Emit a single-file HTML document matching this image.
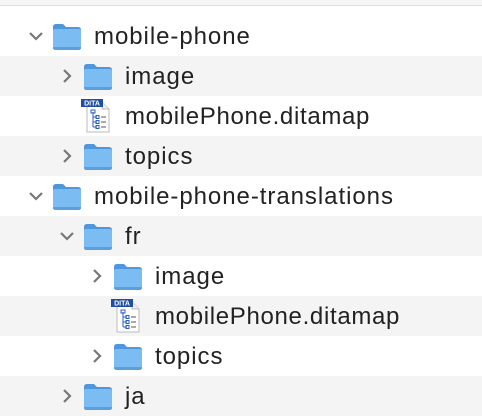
<!DOCTYPE html>
<html><head><style>
body{margin:0;width:482px;height:418px;overflow:hidden;background:#fff;font-family:"Liberation Sans",sans-serif;position:relative}
.top{position:absolute;left:0;top:0;width:482px;height:5px;background:#f6f6f6;border-bottom:1px solid #dedede}
.row{position:absolute;left:0;width:482px;height:40px}
.g{background:#f4f4f4}
.t{position:absolute;top:7px;font-size:24px;color:#222;letter-spacing:0.95px}
.t2{letter-spacing:0.68px}
.ch{position:absolute;top:12px}
.f{position:absolute;top:6px}
.d{position:absolute;top:4px}
</style></head><body>
<div class="top"></div>
<svg width="0" height="0" style="position:absolute">
<defs>
<g id="fold"><path d="M1 4 Q1 1 4 1 H11 L14 4 H26 Q29 4 29 7 V24 Q29 27 26 27 H4 Q1 27 1 24Z" fill="#4f97dc"/><path d="M1 8 Q1 6 3 6 H27 Q29 6 29 8 V24 Q29 27 26 27 H4 Q1 27 1 24Z" fill="#7bbcf2"/><path d="M1 24 V25 Q1 27 4 27 H26 Q29 27 29 25 V24Z" fill="#5d9fdc"/></g>
<g id="down"><path d="M1 1 L7 7 L13 1" fill="none" stroke="#777" stroke-width="2.2"/></g>
<g id="right"><path d="M1 1 L7 7 L1 13" fill="none" stroke="#777" stroke-width="2.2"/></g>
<g id="dita"><path d="M6 3 H21 L28 10 V33 H6Z" fill="#fff" stroke="#bbb"/><path d="M21 3 V10 H28" fill="#eee" stroke="#bbb"/><rect x="0" y="0" width="22" height="8" fill="#1f4ea3"/><text x="11" y="6.5" font-size="7" fill="#fff" font-weight="bold" text-anchor="middle" font-family="Liberation Sans">DITA</text><path d="M12 13 V28 M12 18 H16 M12 23 H16 M12 28 H16" stroke="#2a5fc4" fill="none"/><rect x="10" y="11" width="4" height="3" fill="none" stroke="#2a5fc4"/><rect x="15" y="16.5" width="3" height="3" fill="none" stroke="#2a5fc4"/><rect x="15" y="21.5" width="3" height="3" fill="none" stroke="#2a5fc4"/><rect x="15" y="26.5" width="3" height="3" fill="none" stroke="#2a5fc4"/><path d="M20 18H25M20 23H25M20 28H25" stroke="#555"/></g>
</defs></svg>

<div class="row" style="top:16px"><svg class="ch" style="left:29px;top:16px" width="15" height="10"><use href="#down"/></svg><svg class="f" style="left:52px;top:7px" width="30" height="28"><use href="#fold"/></svg><span class="t" style="left:94px">mobile-phone</span></div>
<div class="row g" style="top:56px"><svg class="ch" style="left:63px;top:13px" width="10" height="15"><use href="#right"/></svg><svg class="f" style="left:83px;top:7px" width="30" height="28"><use href="#fold"/></svg><span class="t" style="left:125px">image</span></div>
<div class="row" style="top:96px"><svg class="d" style="left:81px;top:3px" width="29" height="34"><use href="#dita"/></svg><span class="t t2" style="left:125px">mobilePhone.ditamap</span></div>
<div class="row g" style="top:136px"><svg class="ch" style="left:63px;top:13px" width="10" height="15"><use href="#right"/></svg><svg class="f" style="left:83px;top:7px" width="30" height="28"><use href="#fold"/></svg><span class="t" style="left:125px">topics</span></div>
<div class="row" style="top:176px"><svg class="ch" style="left:29px;top:16px" width="15" height="10"><use href="#down"/></svg><svg class="f" style="left:52px;top:7px" width="30" height="28"><use href="#fold"/></svg><span class="t" style="left:94px">mobile-phone-translations</span></div>
<div class="row g" style="top:216px"><svg class="ch" style="left:60px;top:16px" width="15" height="10"><use href="#down"/></svg><svg class="f" style="left:83px;top:7px" width="30" height="28"><use href="#fold"/></svg><span class="t" style="left:125px">fr</span></div>
<div class="row" style="top:256px"><svg class="ch" style="left:93px;top:13px" width="10" height="15"><use href="#right"/></svg><svg class="f" style="left:113px;top:7px" width="30" height="28"><use href="#fold"/></svg><span class="t" style="left:155px">image</span></div>
<div class="row g" style="top:296px"><svg class="d" style="left:111px;top:3px" width="29" height="34"><use href="#dita"/></svg><span class="t t2" style="left:155px">mobilePhone.ditamap</span></div>
<div class="row" style="top:336px"><svg class="ch" style="left:93px;top:13px" width="10" height="15"><use href="#right"/></svg><svg class="f" style="left:113px;top:7px" width="30" height="28"><use href="#fold"/></svg><span class="t" style="left:155px">topics</span></div>
<div class="row g" style="top:376px"><svg class="ch" style="left:63px;top:13px" width="10" height="15"><use href="#right"/></svg><svg class="f" style="left:83px;top:7px" width="30" height="28"><use href="#fold"/></svg><span class="t" style="left:125px">ja</span></div>
</body></html>
